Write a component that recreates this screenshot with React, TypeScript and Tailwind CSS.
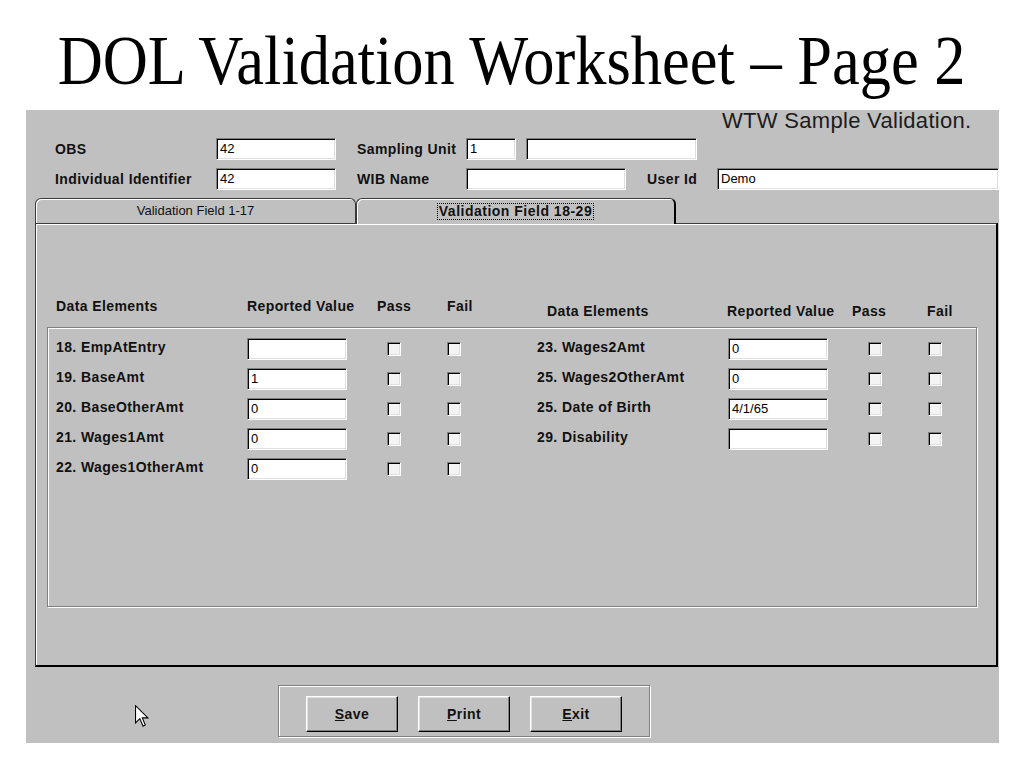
import React from "react";

const Field = ({ value = "", className = "" }: { value?: string; className?: string }) => (
  <div
    className={`h-[22px] bg-white border border-t-[#808080] border-l-[#808080] border-b-white border-r-white shadow-[inset_1px_1px_0_#000,inset_-1px_-1px_0_#dfdfdf] pl-[3px] text-[13px] leading-[20px] text-black ${className}`}
  >
    {value}
  </div>
);

const Check = () => (
  <div className="w-[14px] h-[14px] bg-[#f4f4f4] border border-t-[#808080] border-l-[#808080] border-b-white border-r-white shadow-[inset_1px_1px_0_#000,inset_-1px_-1px_0_#dfdfdf]" />
);

const Label = ({ children, className = "" }: { children: React.ReactNode; className?: string }) => (
  <div className={`text-[14px] font-bold tracking-[0.4px] text-[#111] whitespace-nowrap ${className}`}>
    {children}
  </div>
);

const WinButton = ({ hot, rest }: { hot: string; rest: string }) => (
  <button
    type="button"
    className="w-[92px] h-[36px] bg-[#c0c0c0] border border-t-white border-l-white border-r-black border-b-black shadow-[inset_-1px_-1px_0_#808080,inset_1px_1px_0_#dfdfdf] text-[14px] font-bold tracking-[0.4px] text-[#111]"
  >
    <u>{hot}</u>
    {rest}
  </button>
);

type Row = { name: string; value: string };

const leftRows: Row[] = [
  { name: "18. EmpAtEntry", value: "" },
  { name: "19. BaseAmt", value: "1" },
  { name: "20. BaseOtherAmt", value: "0" },
  { name: "21. Wages1Amt", value: "0" },
  { name: "22. Wages1OtherAmt", value: "0" },
];

const rightRows: Row[] = [
  { name: "23. Wages2Amt", value: "0" },
  { name: "25. Wages2OtherAmt", value: "0" },
  { name: "25. Date of Birth", value: "4/1/65" },
  { name: "29. Disability", value: "" },
];

const RowList = ({ rows }: { rows: Row[] }) => (
  <div className="w-[481px] flex flex-col gap-[8px]">
    {rows.map((r) => (
      <div key={r.name} className="grid grid-cols-[191px_140px_60px_90px] items-center h-[22px]">
        <Label className="-mt-[3px]">{r.name}</Label>
        <Field value={r.value} className="w-[100px]" />
        <Check />
        <Check />
      </div>
    ))}
  </div>
);

export default function App() {
  return (
    <div className="w-[1024px] h-[768px] bg-white overflow-hidden font-['Liberation_Sans',Arial,sans-serif]">
      {/* title */}
      <div className="h-[110px] pt-[27px] flex justify-center">
        <h1 className="text-[69px] leading-[69px] text-black whitespace-nowrap scale-x-[0.905] font-['Liberation_Serif','Times_New_Roman',serif]">
          DOL Validation Worksheet – Page 2
        </h1>
      </div>

      {/* window */}
      <div className="ml-[26px] w-[973px] h-[633px] bg-[#c0c0c0] flex flex-col">
        <div className="h-[28px] pl-[696px] text-[22px] leading-[22px] tracking-[0.3px] text-[#1c1c1c] whitespace-nowrap">
          WTW Sample Validation.
        </div>

        <div className="flex items-center h-[22px] pl-[29px]">
          <Label className="w-[161px]">OBS</Label>
          <Field value="42" className="w-[120px]" />
          <Label className="ml-[21px] w-[109px]">Sampling Unit</Label>
          <Field value="1" className="w-[50px]" />
          <Field className="ml-[10px] w-[171px]" />
        </div>

        <div className="flex items-center h-[22px] pl-[29px] mt-[8px]">
          <Label className="w-[161px]">Individual Identifier</Label>
          <Field value="42" className="w-[120px]" />
          <Label className="ml-[21px] w-[109px]">WIB Name</Label>
          <Field className="w-[160px]" />
          <Label className="ml-[21px] w-[70px]">User Id</Label>
          <Field value="Demo" className="w-[282px]" />
        </div>

        {/* tabs */}
        <div className="mt-[8px] pl-[9px] h-[25px] flex items-start relative z-10">
          <div className="w-[321px] h-[25px] border border-b-0 border-[#3a3a3a] rounded-t-[6px] shadow-[inset_1px_1px_0_#fff] flex items-center justify-center text-[13px] text-[#111]">
            Validation Field 1-17
          </div>
          <div className="w-[320px] h-[26px] bg-[#c0c0c0] border border-b-0 border-r-2 border-[#3a3a3a] border-r-black rounded-t-[6px] shadow-[inset_1px_1px_0_#fff] flex items-center justify-center">
            <span className="border border-dotted border-black px-[1px] text-[14px] leading-[15px] font-bold tracking-[0.5px] text-[#111]">
              Validation Field 18-29
            </span>
          </div>
        </div>

        {/* tab page */}
        <div className="ml-[9px] w-[963px] h-[444px] border border-[#3a3a3a] border-r-2 border-b-2 border-r-black border-b-black shadow-[inset_1px_1px_0_#fff]">
          <div className="mt-[72px] h-[31px] pl-[20px] flex items-start">
            <Label className="w-[191px]">Data Elements</Label>
            <Label className="w-[130px]">Reported Value</Label>
            <Label className="w-[70px]">Pass</Label>
            <Label className="w-[100px]">Fail</Label>
            <Label className="w-[180px] mt-[5px]">Data Elements</Label>
            <Label className="w-[125px] mt-[5px]">Reported Value</Label>
            <Label className="w-[75px] mt-[5px]">Pass</Label>
            <Label className="mt-[5px]">Fail</Label>
          </div>

          <div className="ml-[11px] w-[930px] h-[280px] border border-[#808080] shadow-[inset_1px_1px_0_#fff,1px_1px_0_#fff] pt-[10px] pl-[8px] flex">
            <RowList rows={leftRows} />
            <RowList rows={rightRows} />
          </div>
        </div>

        {/* bottom bar */}
        <div className="mt-[18px] flex items-start">
          <div className="w-[252px] pl-[109px] pt-[20px]">
            <svg width="14" height="23" viewBox="0 0 13 21">
              <path
                d="M0.5 0.5 L0.5 16.5 L4.5 12.5 L7.5 19.5 L9.5 18.5 L6.8 11.8 L12 11.8 Z"
                fill="#fff"
                stroke="#000"
                strokeWidth="1"
              />
            </svg>
          </div>
          <div className="w-[372px] h-[52px] border border-[#808080] shadow-[inset_1px_1px_0_#fff,1px_1px_0_#fff] pt-[10px] pl-[27px] flex gap-[20px]">
            <WinButton hot="S" rest="ave" />
            <WinButton hot="P" rest="rint" />
            <WinButton hot="E" rest="xit" />
          </div>
        </div>
      </div>
    </div>
  );
}
